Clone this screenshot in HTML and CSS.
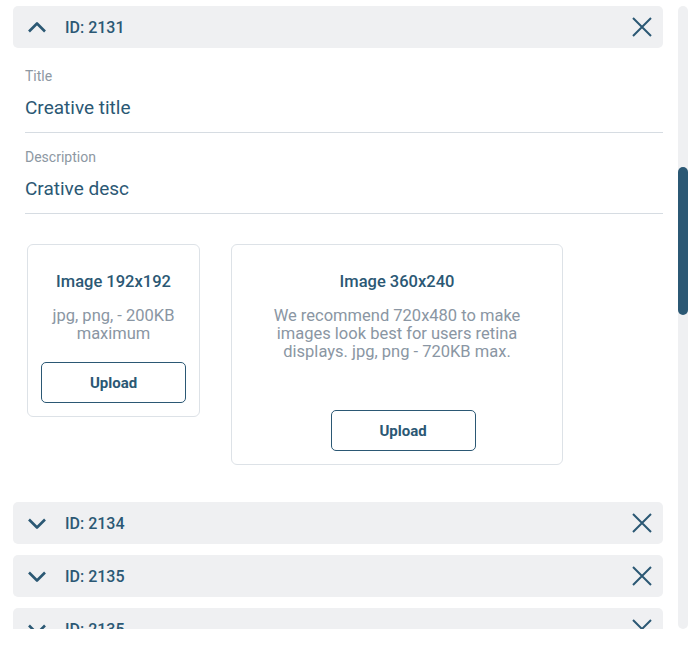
FILE: index.html
```html
<!DOCTYPE html>
<html lang="en">
<head>
    <meta charset="UTF-8">
    <meta name="viewport" content="width=device-width, initial-scale=1.0">
    <title>Creatives</title>
    <link rel="stylesheet" href="styles.css">
</head>
<body>
    <div class="panel">
        <div class="list">
            <!-- open item -->
            <div class="item open">
                <div class="item-head">
                    <svg class="chevron" width="20" height="12" viewBox="0 0 20 12"><path d="M2 10.5L10 2.5L18 10.5"/></svg>
                    <span class="item-id">ID: 2131</span>
                    <svg class="close" width="20" height="20" viewBox="0 0 20 20"><path d="M1 1L19 19M19 1L1 19"/></svg>
                </div>
                <div class="item-body">
                    <div class="field">
                        <div class="field-label">Title</div>
                        <div class="field-value">Creative title</div>
                    </div>
                    <div class="field">
                        <div class="field-label">Description</div>
                        <div class="field-value">Crative desc</div>
                    </div>
                    <div class="uploads">
                        <div class="upload-card small">
                            <div class="card-title">Image 192x192</div>
                            <div class="card-desc">jpg, png, - 200KB maximum</div>
                            <button class="upload-btn">Upload</button>
                        </div>
                        <div class="upload-card wide">
                            <div class="card-title">Image 360x240</div>
                            <div class="card-desc">We recommend 720x480 to make images look best for users retina displays. jpg, png - 720KB max.</div>
                            <button class="upload-btn">Upload</button>
                        </div>
                    </div>
                </div>
            </div>

            <div class="item">
                <div class="item-head">
                    <svg class="chevron" width="20" height="12" viewBox="0 0 20 12"><path d="M2 2.5L10 10.5L18 2.5"/></svg>
                    <span class="item-id">ID: 2134</span>
                    <svg class="close" width="20" height="20" viewBox="0 0 20 20"><path d="M1 1L19 19M19 1L1 19"/></svg>
                </div>
            </div>
            <div class="item">
                <div class="item-head">
                    <svg class="chevron" width="20" height="12" viewBox="0 0 20 12"><path d="M2 2.5L10 10.5L18 2.5"/></svg>
                    <span class="item-id">ID: 2135</span>
                    <svg class="close" width="20" height="20" viewBox="0 0 20 20"><path d="M1 1L19 19M19 1L1 19"/></svg>
                </div>
            </div>
            <div class="item">
                <div class="item-head">
                    <svg class="chevron" width="20" height="12" viewBox="0 0 20 12"><path d="M2 2.5L10 10.5L18 2.5"/></svg>
                    <span class="item-id">ID: 2135</span>
                    <svg class="close" width="20" height="20" viewBox="0 0 20 20"><path d="M1 1L19 19M19 1L1 19"/></svg>
                </div>
            </div>
        </div>
        <!-- scrollbar -->
        <div class="track">
            <div class="thumb"></div>
        </div>
    </div>
</body>
</html>
```

FILE: styles.css
```css
*{
    margin: 0;
    padding: 0;
    box-sizing: border-box;
}
body{
    font-family: Roboto, "Liberation Sans", sans-serif;
    background-color: #fff;
    color: #2b5874;
}
.panel{
    display: flex;
    height: 629px;
    padding: 6px 0 0 13px;
}
.list{
    width: 650px;
    height: 623px;
    overflow: hidden;
}
/* 列表项 */
.item{
    margin-bottom: 11px;
}
.item.open{
    margin-bottom: 37px;
}
.item-head{
    display: flex;
    align-items: center;
    height: 42px;
    padding: 0 11px 0 14px;
    background-color: #eff0f2;
    border-radius: 5px;
}
.item-head svg{
    fill: none;
    stroke: #2b5874;
}
.chevron{
    stroke-width: 2.6;
    stroke-linejoin: round;
}
.close{
    stroke-width: 2;
}
.item-id{
    flex: 1;
    margin-left: 18px;
    font-size: 16px;
    font-weight: 500;
}
/* 表单 */
.item-body{
    padding: 4px 0 0 12px;
}
.field{
    padding: 16px 0 12px;
    border-bottom: 1px solid #d6dce2;
}
.field-label{
    font-size: 14px;
    line-height: 16px;
    color: #8d98a3;
}
.field-value{
    margin-top: 12px;
    font-size: 19px;
    line-height: 24px;
}
/* 上传卡片 */
.uploads{
    display: flex;
    align-items: flex-start;
    gap: 31px;
    margin-top: 30px;
    padding-left: 2px;
}
.upload-card{
    display: flex;
    flex-direction: column;
    padding: 27px 14px 13px;
    border: 1px solid #dde2e7;
    border-radius: 6px;
    text-align: center;
}
.upload-card.small{
    width: 173px;
    height: 173px;
}
.upload-card.wide{
    width: 332px;
    height: 221px;
}
.card-title{
    font-size: 16.5px;
    line-height: 20px;
    font-weight: 500;
}
.card-desc{
    margin-top: 15px;
    font-size: 16.5px;
    line-height: 18px;
    color: #8a96a3;
}
.upload-btn{
    align-self: center;
    width: 145px;
    height: 41px;
    margin-top: auto;
    background: #fff;
    border: 1.5px solid #2b5874;
    border-radius: 5px;
    font-family: inherit;
    font-size: 15px;
    font-weight: 700;
    color: #2b5874;
}
.wide .upload-btn{
    margin-left: 12px;
}
/* 滚动条 */
.track{
    width: 10px;
    height: 623px;
    margin-left: 15px;
    background-color: #eff0f2;
    border-radius: 5px;
}
.thumb{
    height: 148px;
    margin-top: 161px;
    background-color: #2b5874;
    border-radius: 5px;
}
```
